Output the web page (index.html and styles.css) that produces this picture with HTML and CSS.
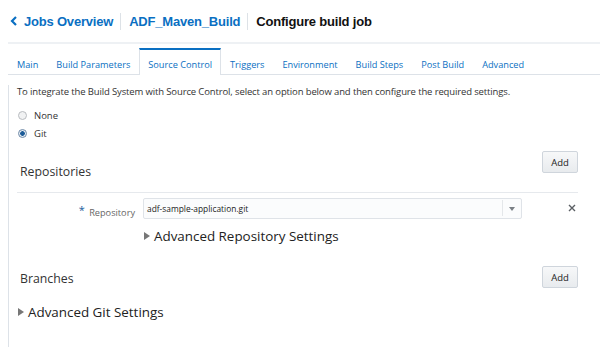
FILE: index.html
```html
<!DOCTYPE html>
<html lang="en">
<head>
    <meta charset="UTF-8">
    <title>Configure build job</title>
    <link rel="stylesheet" href="styles.css">
</head>
<body>
    <div class="crumbs">
        <a class="crumb back" href="#"><svg width="8" height="10" viewBox="0 0 8 10"><path d="M6 1 L2 5 L6 9" fill="none" stroke="#0a6fc2" stroke-width="2.2"/></svg>Jobs Overview</a>
        <span class="sep"></span>
        <a class="crumb" href="#">ADF_Maven_Build</a>
        <span class="sep"></span>
        <span class="crumb current">Configure build job</span>
    </div>

    <div class="tabs">
        <span class="tab">Main</span>
        <span class="tab">Build Parameters</span>
        <span class="tab active">Source Control</span>
        <span class="tab">Triggers</span>
        <span class="tab">Environment</span>
        <span class="tab">Build Steps</span>
        <span class="tab">Post Build</span>
        <span class="tab">Advanced</span>
    </div>

    <div class="panel">
        <p class="intro">To integrate the Build System with Source Control, select an option below and then configure the required settings.</p>

        <label class="radio first"><span class="dot"></span>None</label>
        <label class="radio second"><span class="dot on"></span>Git</label>

        <div class="section-head repos">
            <h2>Repositories</h2>
            <button class="add">Add</button>
        </div>
        <div class="rule"></div>

        <div class="repo-row">
            <span class="field-label"><span class="req">*</span> Repository</span>
            <div class="select">
                <span class="value">adf-sample-application.git</span>
                <span class="arrow"></span>
            </div>
            <svg class="remove" width="8" height="8" viewBox="0 0 8 8"><path d="M1 1 L7 7 M7 1 L1 7" stroke="#5b5f64" stroke-width="1.4"/></svg>
        </div>
        <div class="disclosure indent"><span class="tri"></span>Advanced Repository Settings</div>

        <div class="section-head branches">
            <h2>Branches</h2>
            <button class="add">Add</button>
        </div>

        <div class="disclosure git"><span class="tri"></span>Advanced Git Settings</div>
    </div>
</body>
</html>
```

FILE: styles.css
```css
:root {
    --link: #0a6fc2;
    --text: #333;
    --line: #dde2e8;
}

body {
    margin: 0;
    background: #fff;
    color: var(--text);
    font-family: "Open Sans", "Noto Sans", sans-serif;
}

/* 面包屑 */
.crumbs {
    display: flex;
    align-items: center;
    height: 42px;
    margin-left: 8px;
    padding-left: 2px;
    border-bottom: 2px solid #eef1f4;
    font-family: "Liberation Sans", Arial, sans-serif;
    font-size: 13px;
    letter-spacing: -0.2px;
    font-weight: bold;
    white-space: nowrap;
}

.crumb {
    color: var(--link);
    text-decoration: none;
}

.crumb.back svg {
    margin-right: 6px;
}

.crumb.current {
    color: #111;
}

.sep {
    width: 1px;
    height: 17px;
    background: #dde2e7;
    margin: 0 8px 0 7px;
}

/* 标签页 */
.tabs {
    display: flex;
    margin: 4px 0 0 8px;
    border-bottom: 1px solid var(--line);
    font-size: 9.2px;
    white-space: nowrap;
}

.tab {
    padding: 5px 8px 0;
    line-height: 19px;
    color: var(--link);
    border: 1px solid transparent;
    border-top: 2px solid transparent;
    border-bottom: none;
}

.tab.active {
    border-color: var(--line);
    border-top-color: var(--link);
    background: #fff;
    margin-bottom: -1px;
    padding-bottom: 1px;
}

/* 内容面板 */
.panel {
    margin-left: 8px;
    height: 265px;
    border-left: 1px solid var(--line);
    border-bottom: 2px solid #e3e7eb;
    border-bottom-left-radius: 3px;
    padding: 0 22px 0 8px;
    font-size: 9.5px;
}

.intro {
    margin: 10px 0 0;
    line-height: 14px;
    letter-spacing: -0.13px;
    white-space: nowrap;
}

.radio {
    display: flex;
    align-items: center;
    height: 17px;
    padding-left: 1px;
}

.radio.first {
    margin-top: 8px;
}

.radio.second {
    margin-top: 1px;
}

.dot {
    width: 7px;
    height: 7px;
    border: 1px solid #b9bcc0;
    border-radius: 50%;
    background: #f1f2f3;
    margin-right: 7px;
}

.dot.on {
    border-color: #6f8aa8;
    background: radial-gradient(circle, #1d5c98 0 2px, #e6edf4 2.6px);
}

.section-head {
    display: flex;
    align-items: flex-start;
    justify-content: space-between;
    padding-left: 3px;
}

.section-head h2 {
    margin: 0;
    line-height: 16px;
    font-size: 12.3px;
    font-weight: normal;
}

.section-head.repos {
    margin-top: 9px;
}

.section-head.repos h2 {
    margin-top: 13px;
}

.section-head.branches {
    margin-top: 20px;
}

.section-head.branches h2 {
    margin-top: 5px;
}

.add {
    width: 36px;
    height: 22px;
    padding: 0;
    border: 1px solid #cfd5dc;
    border-radius: 2px;
    background: linear-gradient(#f7f8f9, #e8ebee);
    font-family: "Open Sans", "Noto Sans", sans-serif;
    font-size: 9.5px;
    color: #222;
}

.rule {
    height: 1px;
    background: #e6e9ed;
    margin-top: 12px;
}

.repo-row {
    display: flex;
    align-items: center;
    margin-top: 4px;
}

.field-label {
    width: 118px;
    text-align: right;
    color: #666;
    font-size: 9.2px;
    margin-right: 8px;
    padding-top: 5px;
}

.req {
    color: #1a5c9c;
    font-size: 11px;
    vertical-align: 2px;
    margin-right: 2px;
}

.select {
    display: flex;
    align-items: center;
    width: 377px;
    height: 19px;
    border: 1px solid #dfe3e8;
    border-radius: 2px;
    background: #fbfcfd;
    font-size: 8.4px;
    color: #222;
}

.select .value {
    flex: 1;
    padding-left: 3px;
}

.arrow {
    width: 18px;
    height: 16px;
    border-left: 1px solid #e4e7ea;
    display: flex;
    align-items: center;
    justify-content: center;
}

.arrow::after {
    content: "";
    border: 3px solid transparent;
    border-top: 4px solid #7a7f85;
    margin-top: 4px;
}

.remove {
    margin-left: auto;
    margin-right: 2px;
}

.disclosure {
    display: flex;
    align-items: center;
    font-size: 13.4px;
    line-height: 20px;
    color: #222;
    white-space: nowrap;
}

.disclosure.indent {
    margin: 7px 0 0 127px;
}

.disclosure.git {
    margin-top: 14px;
    padding-left: 1px;
}

.tri {
    border: 4px solid transparent;
    border-left: 6px solid #777;
    border-right: none;
    margin-right: 4px;
}
```
